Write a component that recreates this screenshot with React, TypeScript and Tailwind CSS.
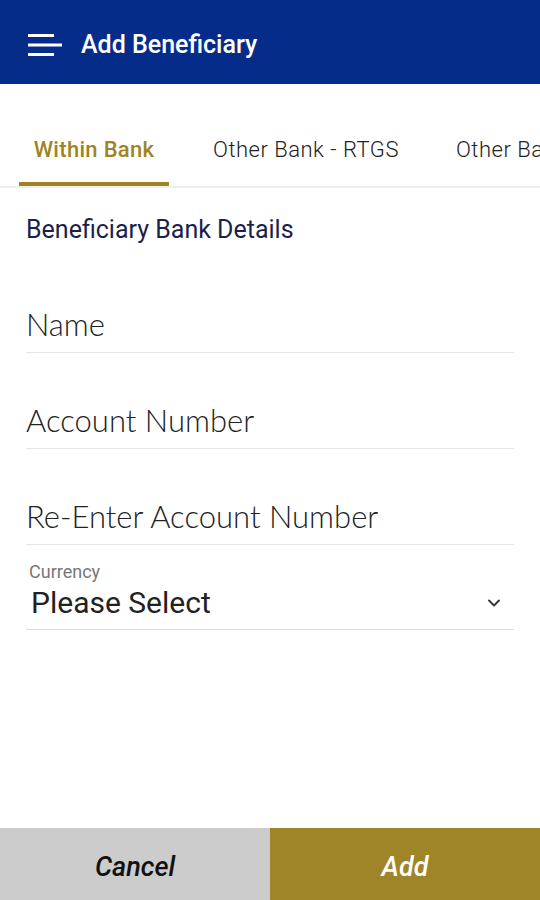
import React from 'react';
import { ChevronDown } from 'lucide-react';

const Field: React.FC<{ label: string }> = ({ label }) => (
  <div className="h-[96px] flex flex-col justify-end">
    <div className="h-[54px] flex items-center border-b border-[#e6e6e6] text-[31px] font-light text-[#222] pb-[2px]"
      style={{ fontFamily: 'Lato, sans-serif' }}>
      {label}
    </div>
  </div>
);

const App: React.FC = () => {
  return (
    <div className="w-[540px] h-[900px] flex flex-col bg-white overflow-hidden" style={{ fontFamily: 'Roboto, sans-serif' }}>
      {/* HEADER */}
      <header className="h-[84px] bg-[#062c8a] flex items-center pl-[28px] pt-[6px] gap-[19px] shrink-0">
        <svg width="34" height="26" viewBox="0 0 34 26">
          <rect x="0" y="2" width="26" height="3" fill="white" />
          <rect x="0" y="11.5" width="34" height="3" fill="white" />
          <rect x="0" y="21" width="26" height="3" fill="white" />
        </svg>
        <h1 className="text-[25px] font-medium text-white">Add Beneficiary</h1>
      </header>

      {/* TABS */}
      <div className="h-[104px] flex items-end border-b-[2px] border-[#eeeeee] whitespace-nowrap overflow-hidden shrink-0">
        <div className="ml-[19px] w-[150px] shrink-0 h-full flex flex-col">
          <div className="flex-1 flex items-center justify-center pt-[32px] text-[22px] font-medium tracking-[0.3px] text-[#a08424]">Within Bank</div>
          <div className="h-[4px] bg-[#a08424]" />
        </div>
        <div className="ml-[44px] shrink-0 h-full flex items-center pt-[32px] pb-[4px] text-[22px] font-light tracking-[0.5px] text-[#222]">Other Bank - RTGS</div>
        <div className="ml-[57px] shrink-0 h-full flex items-center pt-[32px] pb-[4px] text-[22px] font-light tracking-[0.5px] text-[#222]">Other Bank - NEFT</div>
      </div>

      {/* FORM */}
      <div className="px-[26px] flex flex-col">
        <h2 className="mt-[27px] text-[25px] text-[#1c1f4c] leading-[30px]">Beneficiary Bank Details</h2>
        <div className="mt-[12px] flex flex-col">
          <Field label="Name" />
          <Field label="Account Number" />
          <Field label="Re-Enter Account Number" />
        </div>
        <div className="flex flex-col border-b border-[#dcdcdc] pb-[8px]">
          <span className="mt-[16px] ml-[3px] text-[18px] text-[#777] leading-[22px]">Currency</span>
          <div className="flex items-center justify-between pl-[5px] pr-[10px] pt-[2px]">
            <span className="text-[30px] text-[#222] leading-[36px]">Please Select</span>
            <ChevronDown size={20} strokeWidth={2.2} className="text-[#333]" />
          </div>
        </div>
      </div>

      {/* FOOTER */}
      <div className="mt-auto h-[72px] grid grid-cols-2 shrink-0">
        <button className="bg-[#cccccc] text-[27px] italic font-medium text-[#111] pt-[6px]">Cancel</button>
        <button className="bg-[#a08428] text-[27px] italic font-medium text-white pt-[6px]">Add</button>
      </div>
    </div>
  );
};

export default App;
